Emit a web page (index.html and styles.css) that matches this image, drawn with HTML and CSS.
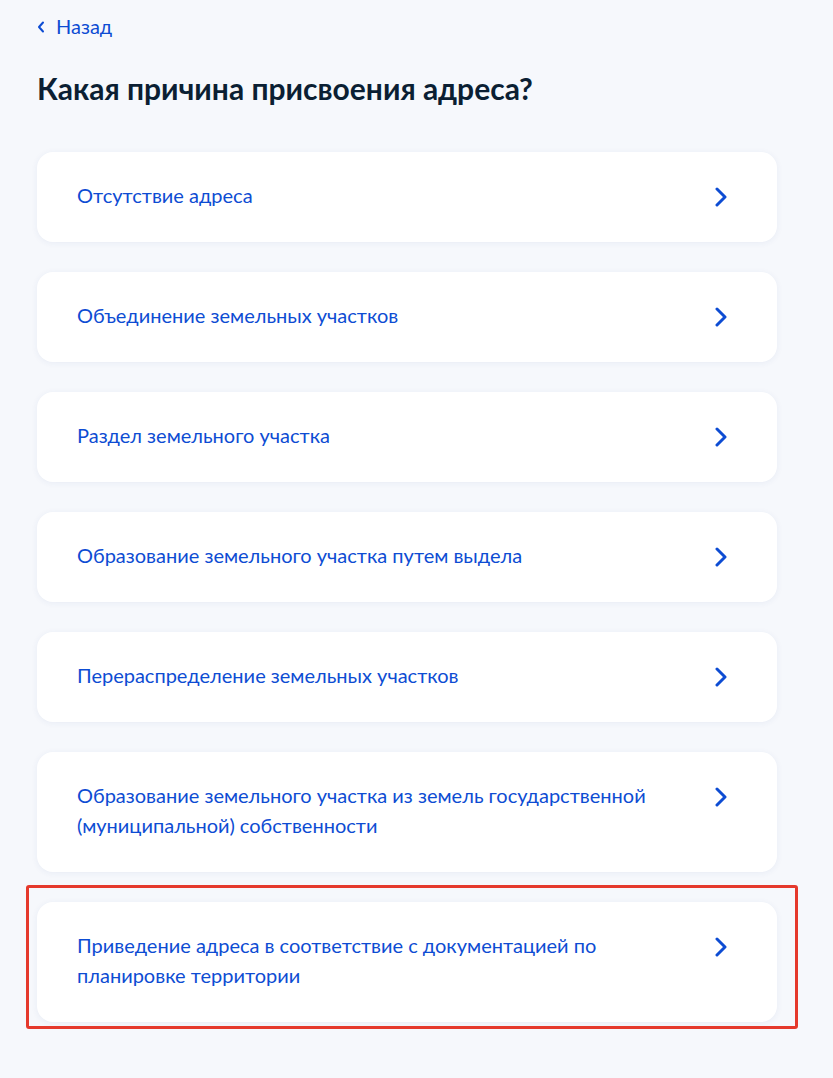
FILE: index.html
```html
<!DOCTYPE html>
<html lang="ru">
<head>
<meta charset="utf-8">
<title>Какая причина присвоения адреса?</title>
<link rel="stylesheet" href="styles.css">
</head>
<body>
<main class="page">
  <a class="back" href="#">
    <svg class="back-icon" width="8" height="12" viewBox="0 0 8 12"><path d="M6 1.5 L2 6 L6 10.5" fill="none" stroke="#0d4cd3" stroke-width="2" stroke-linecap="round" stroke-linejoin="round"/></svg>
    <span>Назад</span>
  </a>
  <h1 class="title">Какая причина присвоения адреса?</h1>
  <ul class="options">
    <li class="option"><span class="option-text">Отсутствие адреса</span><svg class="chev" width="12" height="20" viewBox="0 0 12 20"><path d="M2 2 L10 10 L2 18" fill="none" stroke="#0d4cd3" stroke-width="3" stroke-linecap="round" stroke-linejoin="round"/></svg></li>
    <li class="option"><span class="option-text">Объединение земельных участков</span><svg class="chev" width="12" height="20" viewBox="0 0 12 20"><path d="M2 2 L10 10 L2 18" fill="none" stroke="#0d4cd3" stroke-width="3" stroke-linecap="round" stroke-linejoin="round"/></svg></li>
    <li class="option"><span class="option-text">Раздел земельного участка</span><svg class="chev" width="12" height="20" viewBox="0 0 12 20"><path d="M2 2 L10 10 L2 18" fill="none" stroke="#0d4cd3" stroke-width="3" stroke-linecap="round" stroke-linejoin="round"/></svg></li>
    <li class="option"><span class="option-text">Образование земельного участка путем выдела</span><svg class="chev" width="12" height="20" viewBox="0 0 12 20"><path d="M2 2 L10 10 L2 18" fill="none" stroke="#0d4cd3" stroke-width="3" stroke-linecap="round" stroke-linejoin="round"/></svg></li>
    <li class="option"><span class="option-text">Перераспределение земельных участков</span><svg class="chev" width="12" height="20" viewBox="0 0 12 20"><path d="M2 2 L10 10 L2 18" fill="none" stroke="#0d4cd3" stroke-width="3" stroke-linecap="round" stroke-linejoin="round"/></svg></li>
    <li class="option"><span class="option-text">Образование земельного участка из земель государственной (муниципальной) собственности</span><svg class="chev" width="12" height="20" viewBox="0 0 12 20"><path d="M2 2 L10 10 L2 18" fill="none" stroke="#0d4cd3" stroke-width="3" stroke-linecap="round" stroke-linejoin="round"/></svg></li>
    <li class="option option-marked"><span class="option-text">Приведение адреса в соответствие с документацией по планировке территории</span><svg class="chev" width="12" height="20" viewBox="0 0 12 20"><path d="M2 2 L10 10 L2 18" fill="none" stroke="#0d4cd3" stroke-width="3" stroke-linecap="round" stroke-linejoin="round"/></svg></li>
  </ul>
</main>
</body>
</html>
```

FILE: styles.css
```css
html, body {
  margin: 0;
  padding: 0;
}
body {
  background: #f6f8fc;
  font-family: Lato, "Noto Sans", sans-serif;
  color: #0b1f33;
}
.page {
  width: 740px;
  padding: 14px 0 56px 37px;
}
.back {
  display: inline-flex;
  align-items: center;
  gap: 11px;
  color: #0d4cd3;
  text-decoration: none;
  font-size: 20px;
  line-height: 24px;
}
.back-icon {
  display: block;
  margin-top: 1px;
}
.title {
  margin: 32px 0 0;
  font-size: 30px;
  line-height: 36px;
  font-weight: 700;
  color: #0b1f33;
}
.options {
  list-style: none;
  margin: 46px 0 0;
  padding: 0;
  display: flex;
  flex-direction: column;
  gap: 30px;
}
.option {
  display: flex;
  align-items: flex-start;
  justify-content: space-between;
  gap: 30px;
  background: #ffffff;
  border-radius: 16px;
  padding: 28px 50px 32px 40px;
  box-shadow: 0 1px 6px rgba(40, 70, 140, 0.07);
  color: #0d4cd3;
  font-size: 20px;
  line-height: 30px;
}
.option-text {
  max-width: 590px;
}
.chev {
  flex: none;
  margin-top: 7px;
}
.option-marked {
  position: relative;
}
.option-marked::after {
  content: "";
  position: absolute;
  left: -11px;
  top: -17px;
  right: -21px;
  bottom: -7px;
  border: 3px solid #e5392c;
  border-radius: 3px;
  pointer-events: none;
}
```
